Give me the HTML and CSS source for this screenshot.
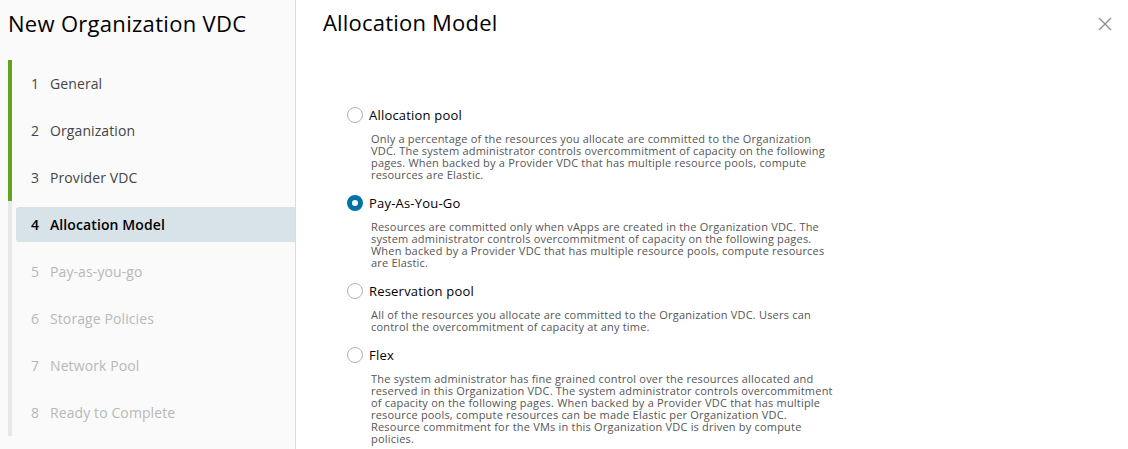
FILE: index.html
```html
<!DOCTYPE html>
<html lang="en">
<head>
<meta charset="utf-8">
<title>New Organization VDC</title>
<link rel="stylesheet" href="styles.css">
</head>
<body>
<div class="wizard">
  <aside class="sidebar">
    <h1 class="wizard-title">New Organization VDC</h1>
    <ol class="steps">
      <li class="step done"><span class="step-inner"><span class="num">1</span>General</span></li>
      <li class="step done"><span class="step-inner"><span class="num">2</span>Organization</span></li>
      <li class="step done"><span class="step-inner"><span class="num">3</span>Provider VDC</span></li>
      <li class="step active"><span class="step-inner"><span class="num">4</span>Allocation Model</span></li>
      <li class="step todo"><span class="step-inner"><span class="num">5</span>Pay-as-you-go</span></li>
      <li class="step todo"><span class="step-inner"><span class="num">6</span>Storage Policies</span></li>
      <li class="step todo"><span class="step-inner"><span class="num">7</span>Network Pool</span></li>
      <li class="step todo"><span class="step-inner"><span class="num">8</span>Ready to Complete</span></li>
    </ol>
  </aside>
  <main class="content">
    <header class="content-header">
      <h2 class="page-title">Allocation Model</h2>
      <button class="close" aria-label="Close">
        <svg width="14" height="14" viewBox="0 0 14 14"><path d="M1 1L13 13M13 1L1 13" stroke="#8c8c8c" stroke-width="1.3" fill="none"/></svg>
      </button>
    </header>
    <div class="options">
      <div class="option">
        <label class="radio"><span class="circle"></span>Allocation pool</label>
        <p class="desc">Only a percentage of the resources you allocate are committed to the Organization VDC. The system administrator controls overcommitment of capacity on the following pages. When backed by a Provider VDC that has multiple resource pools, compute resources are Elastic.</p>
      </div>
      <div class="option">
        <label class="radio"><span class="circle checked"></span>Pay-As-You-Go</label>
        <p class="desc">Resources are committed only when vApps are created in the Organization VDC. The system administrator controls overcommitment of capacity on the following pages. When backed by a Provider VDC that has multiple resource pools, compute resources are Elastic.</p>
      </div>
      <div class="option">
        <label class="radio"><span class="circle"></span>Reservation pool</label>
        <p class="desc">All of the resources you allocate are committed to the Organization VDC. Users can control the overcommitment of capacity at any time.</p>
      </div>
      <div class="option">
        <label class="radio"><span class="circle"></span>Flex</label>
        <p class="desc">The system administrator has fine grained control over the resources allocated and reserved in this Organization VDC. The system administrator controls overcommitment of capacity on the following pages. When backed by a Provider VDC that has multiple resource pools, compute resources can be made Elastic per Organization VDC. Resource commitment for the VMs in this Organization VDC is driven by compute policies.</p>
      </div>
    </div>
  </main>
</div>
</body>
</html>
```

FILE: styles.css
```css
* { box-sizing: border-box; }
html, body { margin: 0; padding: 0; }
body {
  font-family: "Open Sans", "Noto Sans", sans-serif;
  color: #333;
  background: #fff;
  width: 1128px;
  height: 449px;
  overflow: hidden;
}
.wizard {
  display: flex;
  height: 449px;
}
.sidebar {
  width: 296px;
  flex: none;
  background: #fafafa;
  border-right: 1px solid #dcdcdc;
}
.wizard-title {
  margin: 0;
  height: 60px;
  padding: 8px 0 0 8px;
  font-size: 22px;
  font-weight: 400;
  line-height: 30px;
  color: #000;
  letter-spacing: 0.3px;
}
.steps {
  list-style: none;
  margin: 0 0 0 8px;
  padding: 0;
}
.step {
  height: 47px;
  border-left: 4px solid #e8e8e8;
  display: flex;
  align-items: stretch;
  padding: 6px 0 6px 4px;
}
.step.done { border-left-color: #62a420; color: #454545; }
.step.todo { color: #b8b8b8; }
.step.active .step-inner {
  background: #d8e3e9;
  color: #000;
  font-weight: 600;
  border-radius: 3px 0 0 3px;
}
.step-inner {
  flex: 1;
  display: flex;
  align-items: center;
  padding-left: 15px;
  font-size: 14px;
  letter-spacing: 0.1px;
}
.num {
  width: 19px;
  flex: none;
}
.content {
  flex: 1;
  padding: 0 0 0 27px;
}
.content-header {
  display: flex;
  justify-content: space-between;
  align-items: flex-start;
  height: 103px;
}
.page-title {
  margin: 0;
  padding-top: 8px;
  font-size: 22px;
  font-weight: 400;
  line-height: 28px;
  color: #000;
  letter-spacing: 0.2px;
}
.close {
  border: 0;
  background: none;
  padding: 0;
  margin: 17px 16px 0 0;
  width: 14px;
  height: 14px;
  cursor: pointer;
}
.close svg { display: block; }
.options {
  padding-left: 24px;
}
.option {
  margin-bottom: 10px;
}
.radio {
  display: flex;
  align-items: center;
  height: 24px;
  font-size: 13px;
  color: #000;
  letter-spacing: 0.2px;
}
.circle {
  width: 16px;
  height: 16px;
  border: 1px solid #b3b3b3;
  border-radius: 50%;
  background: #fff;
  margin-right: 6px;
  flex: none;
}
.circle.checked {
  border: 5px solid #0072a3;
  background: #fff;
}
.desc {
  margin: 6px 0 0 24px;
  width: 462px;
  font-size: 11px;
  line-height: 12px;
  color: #565656;
  letter-spacing: 0.2px;
}
```
